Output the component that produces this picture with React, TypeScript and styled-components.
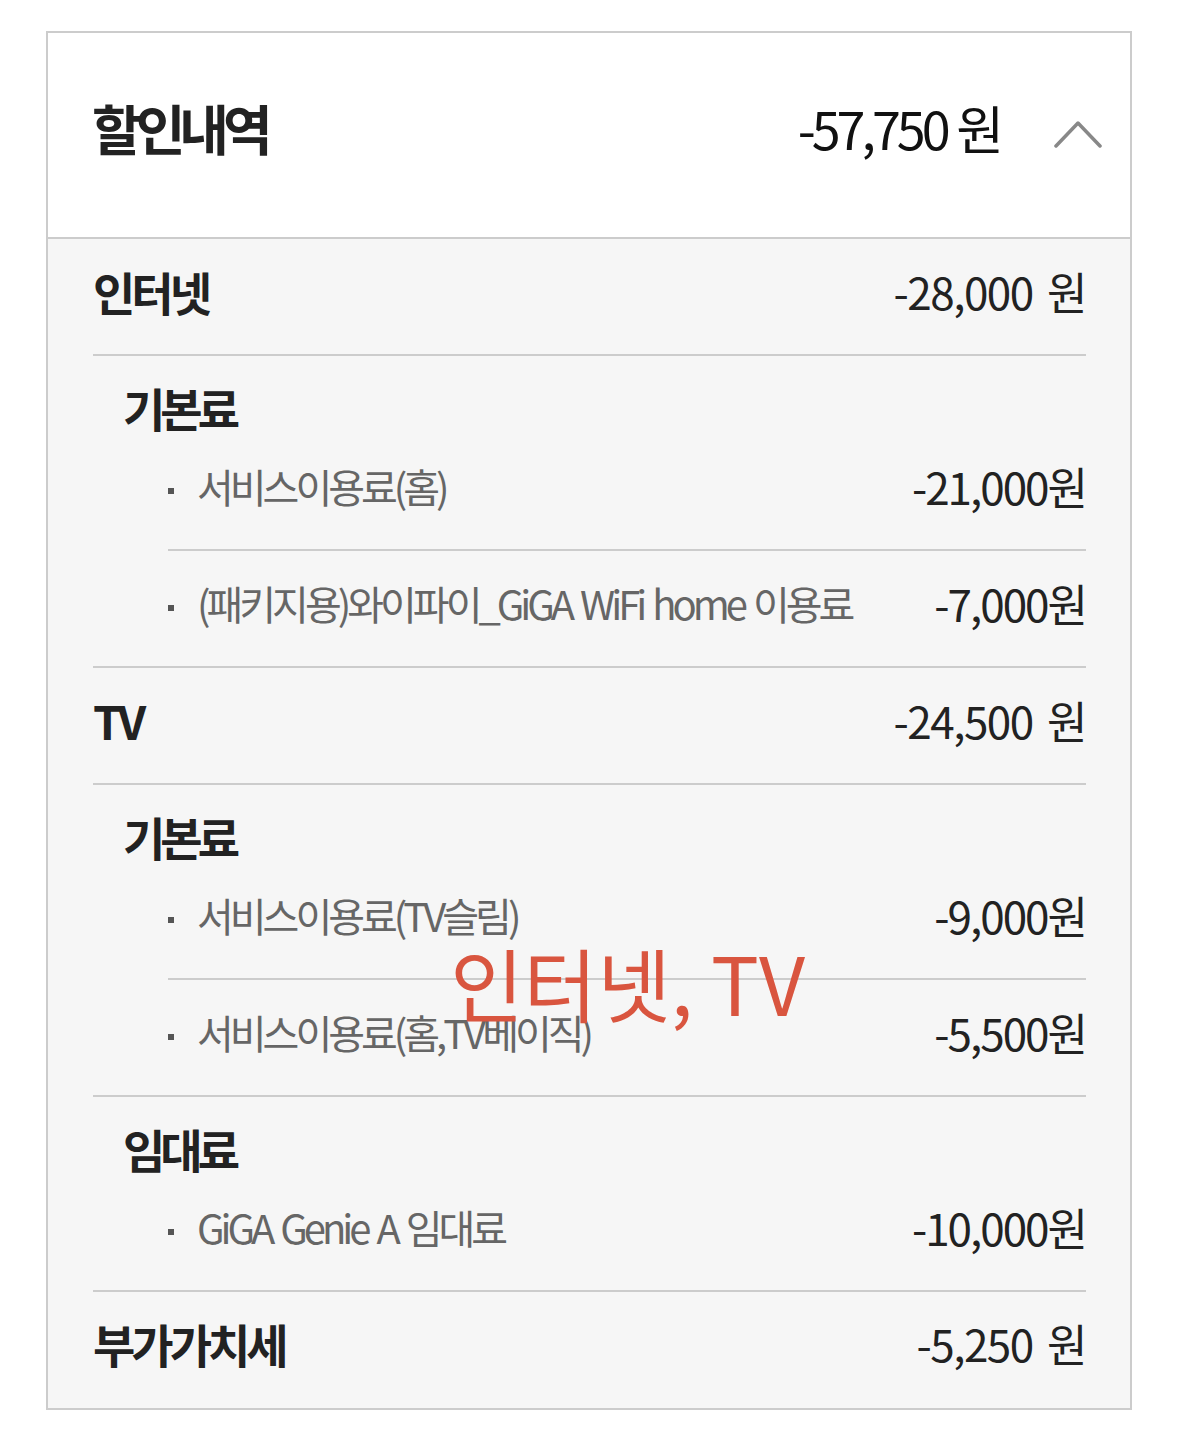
import React from "react";
import styled, { createGlobalStyle } from "styled-components";

const Global = createGlobalStyle`
  html, body { margin: 0; padding: 0; background: #ffffff; }
  body { font-family: "Noto Sans CJK KR", "Noto Sans", sans-serif; }
`;

const Page = styled.div`
  padding: 31px 0 0 46px;
  position: relative;
`;

const Panel = styled.section`
  width: 1082px;
  border: 2px solid #cccccc;
  background: #f6f6f6;
`;

const Header = styled.header`
  display: flex;
  align-items: center;
  background: #ffffff;
  padding: 70px 28px 84px 44px;
  border-bottom: 2px solid #cccccc;
  line-height: 50px;
`;

const Title = styled.h2`
  margin: 0;
  flex: 1;
  font-size: 54px;
  font-weight: 700;
  color: #222222;
  letter-spacing: -6px;
  line-height: 50px;
`;

const Total = styled.span`
  font-size: 52px;
  font-weight: 400;
  color: #111111;
  letter-spacing: -4px;
  word-spacing: 2px;
  margin-right: 54px;
`;

const Chevron = styled.svg`
  width: 48px;
  height: 30px;
  display: block;
  margin-top: 14px;
`;

const Body = styled.div`
  padding: 0 44px 0 45px;
`;

const Row = styled.div<{ $last?: boolean }>`
  display: flex;
  align-items: center;
  justify-content: space-between;
  padding: ${(p) => (p.$last ? "26px 0 40px" : "27px 0 38px")};
  line-height: 50px;
  border-bottom: ${(p) => (p.$last ? "none" : "2px solid #cccccc")};
`;

const RowLabel = styled.span`
  font-size: 46px;
  font-weight: 700;
  color: #222222;
  letter-spacing: -4px;
`;

const RowAmount = styled.span`
  font-size: 44px;
  font-weight: 400;
  color: #222222;
  letter-spacing: -1.5px;
  word-spacing: 6px;
`;

const Group = styled.div`
  border-bottom: 2px solid #cccccc;
`;

const GroupTitle = styled.div`
  padding: 26px 0 2px 30px;
  line-height: 50px;
  font-size: 46px;
  font-weight: 700;
  color: #222222;
  letter-spacing: -5px;
`;

const Item = styled.div<{ $divider?: boolean }>`
  display: flex;
  align-items: center;
  margin-left: 75px;
  padding: 27px 0 38px;
  line-height: 50px;
  border-bottom: ${(p) => (p.$divider ? "2px solid #cccccc" : "none")};
`;

const Bullet = styled.span`
  width: 6px;
  height: 6px;
  background: #555555;
  margin: 10px 23px 0 0;
  flex: none;
`;

const ItemName = styled.span`
  flex: 1;
  font-size: 40px;
  font-weight: 400;
  color: #666666;
  letter-spacing: -4px;
  word-spacing: 4px;
  white-space: nowrap;
`;

const ItemAmount = styled.span`
  font-size: 44px;
  font-weight: 400;
  color: #222222;
  letter-spacing: -2px;
`;

const Stamp = styled.div`
  position: absolute;
  left: 450px;
  top: 936px;
  font-size: 80px;
  line-height: 90px;
  color: #d9553f;
  letter-spacing: 0px;
  font-weight: 400;
  pointer-events: none;
`;

type ItemT = { name: string; amount: string };
type GroupT = { title: string; items: ItemT[] };
type SectionT = { label: string; amount: string; groups: GroupT[] };

const sections: SectionT[] = [
  {
    label: "인터넷",
    amount: "-28,000 원",
    groups: [
      {
        title: "기본료",
        items: [
          { name: "서비스이용료(홈)", amount: "-21,000원" },
          { name: "(패키지용)와이파이_GiGA WiFi home 이용료", amount: "-7,000원" },
        ],
      },
    ],
  },
  {
    label: "TV",
    amount: "-24,500 원",
    groups: [
      {
        title: "기본료",
        items: [
          { name: "서비스이용료(TV슬림)", amount: "-9,000원" },
          { name: "서비스이용료(홈,TV베이직)", amount: "-5,500원" },
        ],
      },
      {
        title: "임대료",
        items: [{ name: "GiGA Genie A 임대료", amount: "-10,000원" }],
      },
    ],
  },
];

export default function App() {
  return (
    <>
      <Global />
      <Page>
        <Panel>
          <Header>
            <Title>할인내역</Title>
            <Total>-57,750 원</Total>
            <Chevron viewBox="0 0 48 30">
              <polyline
                points="2,26 24,3 46,26"
                fill="none"
                stroke="#888888"
                strokeWidth="3.5"
                strokeLinecap="round"
                strokeLinejoin="round"
              />
            </Chevron>
          </Header>
          <Body>
            {sections.map((s) => (
              <React.Fragment key={s.label}>
                <Row>
                  <RowLabel>{s.label}</RowLabel>
                  <RowAmount>{s.amount}</RowAmount>
                </Row>
                {s.groups.map((g, gi) => (
                  <Group key={g.title + gi}>
                    <GroupTitle>{g.title}</GroupTitle>
                    {g.items.map((it, ii) => (
                      <Item key={it.name} $divider={ii < g.items.length - 1}>
                        <Bullet />
                        <ItemName>{it.name}</ItemName>
                        <ItemAmount>{it.amount}</ItemAmount>
                      </Item>
                    ))}
                  </Group>
                ))}
              </React.Fragment>
            ))}
            <Row $last>
              <RowLabel>부가가치세</RowLabel>
              <RowAmount>-5,250 원</RowAmount>
            </Row>
          </Body>
        </Panel>
        <Stamp>인터넷, TV</Stamp>
      </Page>
    </>
  );
}
